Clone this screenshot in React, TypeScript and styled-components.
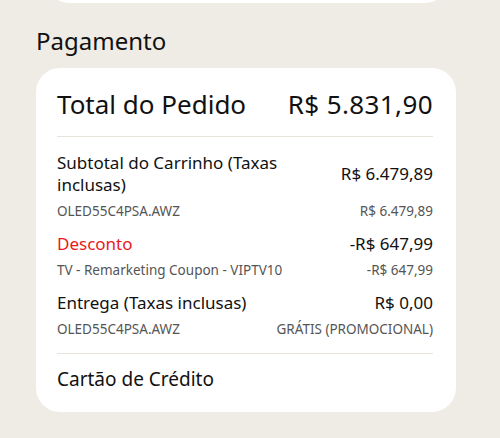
import React from "react";
import styled, { createGlobalStyle } from "styled-components";

const Global = createGlobalStyle`
  html, body { margin: 0; padding: 0; background: #efebe5; }
  body { font-family: "Noto Sans", "Open Sans", sans-serif; color: #111; }
`;

const Page = styled.div`
  width: 500px;
  height: 438px;
  overflow: hidden;
  display: flex;
  flex-direction: column;
  padding: 0 44px 0 36px;
  box-sizing: border-box;
`;

const TopCard = styled.div`
  margin: -20px 9px 0 11px;
  height: 23px;
  background: #fff;
  border-radius: 0 0 22px 22px;
  flex-shrink: 0;
`;

const Heading = styled.h2`
  margin: 21px 0 0 0;
  font-size: 24px;
  font-weight: 400;
  line-height: 34px;
  color: #111;
`;

const Card = styled.section`
  margin-top: 10px;
  background: #fff;
  border-radius: 24px;
  padding: 18px 23px 20px 21px;
  display: flex;
  flex-direction: column;
`;

const TotalRow = styled.div`
  display: flex;
  justify-content: space-between;
  align-items: baseline;
  font-size: 26px;
  line-height: 36px;
  padding-bottom: 14px;
  border-bottom: 1px solid #e8e3dc;
  span:last-child {
    letter-spacing: 0.4px;
  }
`;

const Group = styled.div`
  display: flex;
  flex-direction: column;
`;

const MainRow = styled.div<{ $danger?: boolean }>`
  display: flex;
  justify-content: space-between;
  align-items: center;
  gap: 20px;
  font-size: 17px;
  line-height: 22px;
  color: #111;
  span:first-child {
    color: ${(p) => (p.$danger ? "#e8191d" : "#111")};
  }
  span:last-child {
    white-space: nowrap;
  }
`;

const SubRow = styled.div`
  display: flex;
  justify-content: space-between;
  font-size: 13.5px;
  line-height: 18px;
  color: #555;
  margin-top: 6px;
`;

const Lines = styled.div`
  display: flex;
  flex-direction: column;
  gap: 13px;
  padding: 15px 0 15px;
  border-bottom: 1px solid #e8e3dc;
`;

const Method = styled.div`
  font-size: 19px;
  line-height: 26px;
  padding-top: 12px;
`;

export default function App() {
  return (
    <>
      <Global />
      <Page>
        <TopCard />
        <Heading>Pagamento</Heading>
        <Card>
          <TotalRow>
            <span>Total do Pedido</span>
            <span>R$ 5.831,90</span>
          </TotalRow>
          <Lines>
            <Group>
              <MainRow>
                <span>Subtotal do Carrinho (Taxas inclusas)</span>
                <span>R$ 6.479,89</span>
              </MainRow>
              <SubRow>
                <span>OLED55C4PSA.AWZ</span>
                <span>R$ 6.479,89</span>
              </SubRow>
            </Group>
            <Group>
              <MainRow $danger>
                <span>Desconto</span>
                <span>-R$ 647,99</span>
              </MainRow>
              <SubRow>
                <span>TV - Remarketing Coupon - VIPTV10</span>
                <span>-R$ 647,99</span>
              </SubRow>
            </Group>
            <Group>
              <MainRow>
                <span>Entrega (Taxas inclusas)</span>
                <span>R$ 0,00</span>
              </MainRow>
              <SubRow>
                <span>OLED55C4PSA.AWZ</span>
                <span>GRÁTIS (PROMOCIONAL)</span>
              </SubRow>
            </Group>
          </Lines>
          <Method>Cartão de Crédito</Method>
        </Card>
      </Page>
    </>
  );
}
